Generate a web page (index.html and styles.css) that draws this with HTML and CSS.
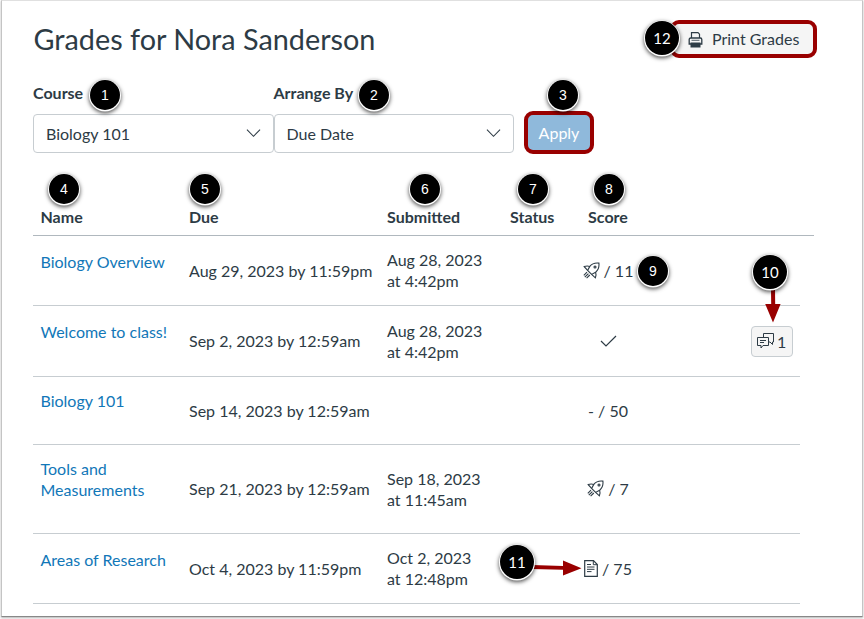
FILE: index.html
```html
<!DOCTYPE html>
<html lang="en">
<head>
    <meta charset="UTF-8">
    <meta name="viewport" content="width=device-width, initial-scale=1.0">
    <title>Grades for Nora Sanderson</title>
    <link rel="stylesheet" href="styles.css">
</head>
<body>
    <!-- Shared icons -->
    <svg class="sprite">
        <symbol id="rocket" viewBox="0 0 17 17">
            <g fill="none" stroke="currentColor" stroke-width="1.1">
                <path d="M15.9 1.1C11.5 .6 8.8 1.8 6.8 4.4L4.6 8.4L8.6 12.4L12.6 10.2C15.2 8.2 16.4 5.5 15.9 1.1Z"/>
                <path d="M6.8 4.4Q4 3.4 1.2 4.6L4.6 8.4"/>
                <path d="M12.6 10.2Q13.6 13 12.4 15.8L8.6 12.4"/>
                <circle cx="12" cy="5" r="1"/>
                <path d="M4 10.2L.8 13.4M5.4 11.6L1.8 15.2M6.8 13L3.6 16.2"/>
            </g>
        </symbol>
        <symbol id="chevron" viewBox="0 0 16 10">
            <path d="M1 1.5L8 8.5L15 1.5" fill="none" stroke="currentColor" stroke-width="1.1"/>
        </symbol>
    </svg>

    <div class="page">
        <div class="top">
            <h1>Grades for Nora Sanderson</h1>
            <button class="print">
                <svg class="print-icon" viewBox="0 0 14 16">
                    <path d="M3 6V.7H9.5L11 2.2V6" fill="none" stroke="currentColor" stroke-width="1.2"/>
                    <path d="M2.5 12H.7V7.5Q.7 6 2.2 6H11.8Q13.3 6 13.3 7.5V12H11.5" fill="none" stroke="currentColor" stroke-width="1.3"/>
                    <path d="M3 8.3H11" stroke="currentColor" stroke-width="0.8"/>
                    <path d="M2 10.5H12V15.5H2Z" fill="currentColor"/>
                </svg>
                Print Grades
            </button>
        </div>

        <div class="filters">
            <div class="field">
                <label>Course</label>
                <div class="select">Biology 101 <svg class="chevron"><use href="#chevron"/></svg></div>
            </div>
            <div class="field">
                <label>Arrange By</label>
                <div class="select">Due Date <svg class="chevron"><use href="#chevron"/></svg></div>
            </div>
            <button class="apply">Apply</button>
        </div>

        <div class="grades">
            <div class="row head">
                <div>Name</div>
                <div>Due</div>
                <div>Submitted</div>
                <div>Status</div>
                <div class="score">Score</div>
            </div>
            <div class="row r1">
                <a class="name">Biology Overview</a>
                <div>Aug 29, 2023 by 11:59pm</div>
                <div>Aug 28, 2023<br>at 4:42pm</div>
                <div></div>
                <div class="score"><svg class="rocket"><use href="#rocket"/></svg>/ 11</div>
            </div>
            <div class="row r2">
                <a class="name">Welcome to class!</a>
                <div>Sep 2, 2023 by 12:59am</div>
                <div>Aug 28, 2023<br>at 4:42pm</div>
                <div></div>
                <div class="score">
                    <svg class="check" viewBox="0 0 17 12"><path d="M1 6L6 11L16 1" fill="none" stroke="currentColor" stroke-width="1.2"/></svg>
                </div>
                <div class="details">
                    <button class="comments">
                        <svg class="chat" viewBox="0 0 17 16">
                            <g fill="none" stroke="currentColor" stroke-width="1">
                                <path d="M.5 4.5H11.5V12.5H6L4 15V12.5H.5Z"/>
                                <path d="M6.5 4.5V.5H16.5V9H15.5V11.5L13 9H11.5"/>
                                <path d="M3 7.5H9M3 9.5H7"/>
                            </g>
                        </svg>
                        1
                    </button>
                </div>
            </div>
            <div class="row r3">
                <a class="name">Biology 101</a>
                <div>Sep 14, 2023 by 12:59am</div>
                <div></div>
                <div></div>
                <div class="score">- / 50</div>
            </div>
            <div class="row r4">
                <a class="name">Tools and Measurements</a>
                <div>Sep 21, 2023 by 12:59am</div>
                <div>Sep 18, 2023<br>at 11:45am</div>
                <div></div>
                <div class="score"><svg class="rocket"><use href="#rocket"/></svg>/ 7</div>
            </div>
            <div class="row r5">
                <a class="name">Areas of Research</a>
                <div>Oct 4, 2023 by 11:59pm</div>
                <div>Oct 2, 2023<br>at 12:48pm</div>
                <div></div>
                <div class="score">
                    <svg class="doc" viewBox="0 0 14 17">
                        <path d="M.7 .7H9.5L13.3 4.5V16.3H.7Z" fill="none" stroke="currentColor" stroke-width="1.2"/>
                        <path d="M9.3 .7V4.7H13.3" fill="none" stroke="currentColor"/>
                        <path d="M3 4.5H7M3 7H10.5M3 9.3H10.5M3 11.6H7.5" stroke="currentColor"/>
                    </svg>/ 75
                </div>
            </div>
        </div>

        <!-- Callouts -->
        <svg class="arrow down" viewBox="0 0 16 34">
            <path d="M6 0H10L10.2 15H15.6L8 33.5L.2 15H6.2Z"/>
        </svg>
        <svg class="arrow right" viewBox="0 0 50 16">
            <path d="M0 5L31 6V.4L49.5 8.3L31 15.6V9.8L0 9Z"/>
        </svg>
        <span class="badge b1">1</span>
        <span class="badge b2">2</span>
        <span class="badge b3">3</span>
        <span class="badge b4">4</span>
        <span class="badge b5">5</span>
        <span class="badge b6">6</span>
        <span class="badge b7">7</span>
        <span class="badge b8">8</span>
        <span class="badge b9">9</span>
        <span class="badge big b10">10</span>
        <span class="badge big b11">11</span>
        <span class="badge big b12">12</span>
    </div>
</body>
</html>
```
FILE: styles.css
```css
* {
    margin: 0;
    padding: 0;
    box-sizing: border-box;
}

body {
    width: 864px;
    height: 619px;
    overflow: hidden;
    background: #fff;
    color: #2d3b45;
    font-family: Lato, "Liberation Sans", sans-serif;
    font-size: 16px;
    line-height: 21px;
}

.sprite {
    display: none;
}

button {
    font: inherit;
    color: inherit;
}

.page {
    position: relative;
    width: 862px;
    height: 617px;
    margin-left: 1px;
    padding: 19px 32px 0;
    border: 1px solid #c4c4c4;
    border-top-color: #e0e0e0;
    border-bottom-color: #888;
    box-shadow: 0 1px 2px rgba(0, 0, 0, 0.3);
}

.top {
    display: flex;
    justify-content: space-between;
    height: 61px;
    margin-right: 13px;
}

h1 {
    font-size: 28.8px;
    font-weight: 400;
    line-height: 38px;
    margin-left: -0.5px;
}

.print {
    display: flex;
    align-items: center;
    gap: 9px;
    width: 147px;
    height: 38px;
    padding: 0 0 2px 14px;
    background: #f5f5f5;
    border: 4px solid #990000;
    border-radius: 9px;
}

.print-icon {
    width: 15px;
    height: 16px;
    margin-top: 3px;
}

.filters {
    display: flex;
    height: 75px;
    margin-left: -1px;
}

.field {
    width: 240.5px;
}

label {
    display: block;
    height: 33px;
    line-height: 24px;
    font-weight: 700;
}

.select {
    display: flex;
    align-items: center;
    justify-content: space-between;
    height: 39px;
    padding: 0 12px 1px;
    border: 1px solid #c7cdd1;
    border-radius: 4px;
}

.chevron {
    width: 15px;
    height: 10px;
}

.apply {
    width: 70px;
    height: 43px;
    margin: 30px 0 0 10px;
    background: #8fb9db;
    border: 4px solid #990000;
    border-radius: 9px;
    color: #fff;
}

.grades {
    margin-left: -1px;
}

.row {
    display: grid;
    grid-template-columns: 148.5px 198px 123px 44px 108px 1fr;
    align-items: center;
    width: 767px;
    padding: 0 7px 1px 7.5px;
    border-bottom: 1px solid #c7cdd1;
}

.head {
    width: 781px;
    height: 80px;
    padding-top: 43px;
    border-bottom: 1px solid #b0b8be;
    font-weight: 700;
}

.r1 {
    height: 70px;
}

.r2 {
    height: 71px;
}

.r3 {
    height: 68px;
}

.r4 {
    height: 89px;
}

.r5 {
    height: 70px;
}

.name {
    align-self: start;
    padding: 15px 20px 0 0;
    color: #1177b8;
}

.r3 .name,
.r4 .name {
    padding-top: 13px;
}

.score {
    display: flex;
    align-items: center;
    justify-content: center;
    gap: 4px;
}

.rocket {
    width: 17px;
    height: 17px;
}

.check {
    width: 17px;
    height: 12px;
}

.doc {
    width: 14px;
    height: 17px;
}

.details {
    justify-self: end;
}

.comments {
    display: flex;
    align-items: center;
    gap: 3px;
    width: 42px;
    height: 31px;
    margin-top: 1px;
    padding-left: 5px;
    background: #f5f5f5;
    border: 1px solid #c7cdd1;
    border-radius: 4px;
}

.chat {
    width: 17px;
    height: 16px;
}

.badge {
    position: absolute;
    width: 30px;
    height: 30px;
    border-radius: 50%;
    background: #000;
    color: #fff;
    font: 14px/30px "Liberation Sans", sans-serif;
    text-align: center;
    box-shadow: 0 0.5px 0 1px #fff, 0 2px 4px 1px rgba(0, 0, 0, 0.7);
}

.big {
    width: 34px;
    height: 34px;
    font: 15px/34px Lato, sans-serif;
}

.b1 { left: 88px; top: 79px; }
.b2 { left: 357px; top: 79px; }
.b3 { left: 546px; top: 79px; }
.b4 { left: 47px; top: 173px; }
.b5 { left: 188px; top: 173px; }
.b6 { left: 408px; top: 173px; }
.b7 { left: 516px; top: 173px; }
.b8 { left: 592px; top: 173px; }
.b9 { left: 636px; top: 255px; }
.b10 { left: 751px; top: 254px; }
.b11 { left: 498px; top: 544px; }
.b12 { left: 643px; top: 20px; }

.arrow {
    position: absolute;
    fill: #990000;
}

.down {
    left: 763px;
    top: 288px;
    width: 16px;
    height: 34px;
}

.right {
    left: 530px;
    top: 559px;
    width: 50px;
    height: 16px;
}
```
